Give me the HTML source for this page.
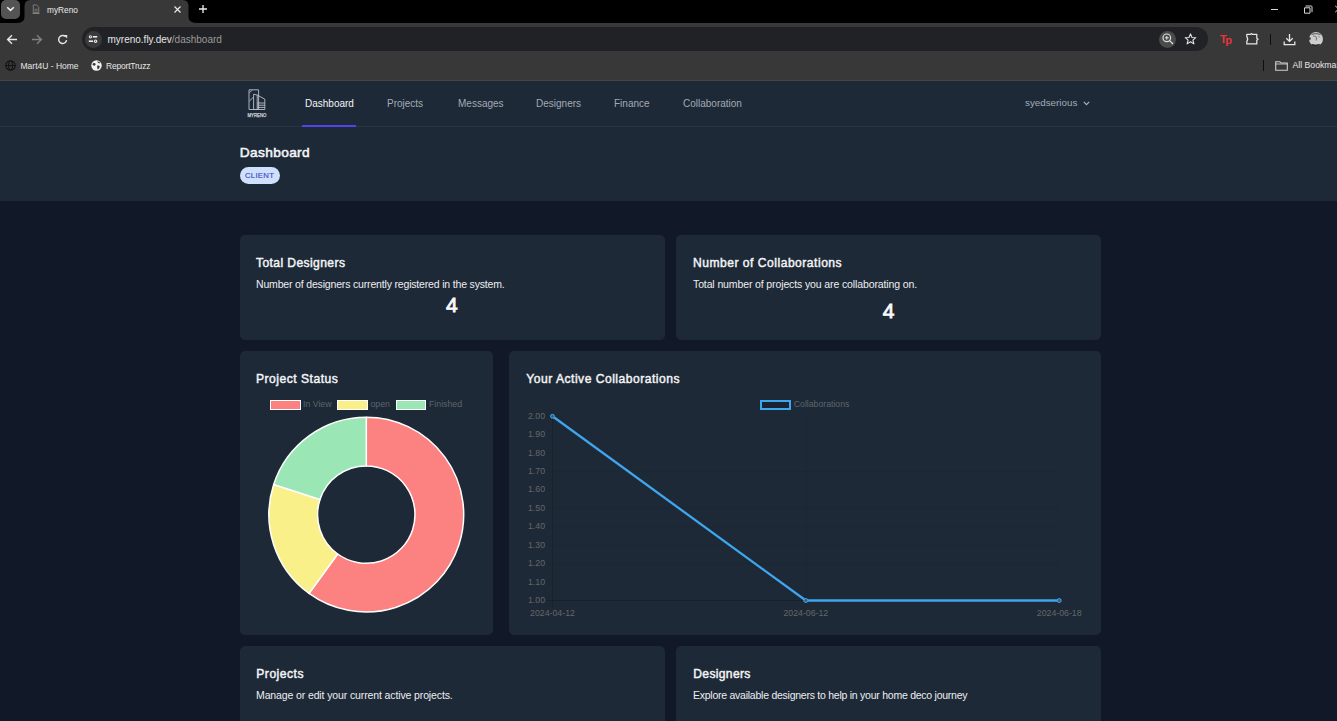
<!DOCTYPE html>
<html><head><meta charset="utf-8">
<style>
*{margin:0;padding:0;box-sizing:border-box}
html,body{width:1337px;height:721px;overflow:hidden;background:#111827;font-family:"Liberation Sans",sans-serif}
.a{position:absolute;white-space:nowrap}
#tabstrip{position:absolute;left:0;top:0;width:1337px;height:23px;background:#000}
#toolbar{position:absolute;left:0;top:22.6px;width:1337px;height:29.4px;background:#383838}
#bookbar{position:absolute;left:0;top:52px;width:1337px;height:29px;background:#383838}
#omni{position:absolute;left:82px;top:27px;width:1126px;height:24px;border-radius:12px;background:#212226}
#nav{position:absolute;left:0;top:81px;width:1337px;height:46px;background:#1e2937;border-bottom:1px solid #2b3544}
#hdr{position:absolute;left:0;top:127px;width:1337px;height:74px;background:#1e2937}
.card{position:absolute;background:#1e2937;border-radius:5px}
.nv{font-size:10px;color:#a3aab5;top:98.4px}
.ct{font-size:12.1px;font-weight:normal;color:#f3f4f6;letter-spacing:.5px;-webkit-text-stroke:.45px #f3f4f6}
.cd{font-size:10.5px;color:#eceef1;letter-spacing:-.12px}
.big{font-size:21px;font-weight:normal;color:#f9fafb;-webkit-text-stroke:.85px #f9fafb}
.tk{font-size:8.75px;color:#666}
</style></head><body>
<div id="tabstrip"></div>
<!-- dropdown btn -->
<div class="a" style="left:1px;top:0;width:19px;height:18.6px;border-radius:5px;background:#545454"></div>
<svg class="a" style="left:6px;top:6px" width="9" height="6" viewBox="0 0 9 6"><path d="M1.2 1.2 L4.5 4.4 L7.8 1.2" fill="none" stroke="#f0f0f0" stroke-width="1.5"/></svg>
<!-- tab -->
<svg class="a" style="left:16px;top:0" width="182" height="23" viewBox="0 0 182 23"><path d="M0 23 Q8.5 23 8.5 17 L8.5 6 Q8.5 0 14.5 0 L166.5 0 Q172.5 0 172.5 6 L172.5 17 Q172.5 23 182 23 Z" fill="#383838"/></svg>
<svg class="a" style="left:32px;top:4px" width="8" height="10" viewBox="0 0 8 10"><path d="M1.3 1 H4.6 L6.8 3.2 V8.6 H1.3 Z" fill="none" stroke="#8c8c8c" stroke-width=".8"/><path d="M2.4 5.3 H5.8 M2.4 6.9 H5.8" stroke="#8c8c8c" stroke-width=".7"/><path d="M0.5 9.6 H7.5" stroke="#bbb" stroke-width=".6"/></svg>
<div class="a" style="left:47px;top:4.5px;font-size:8.3px;color:#ececec">myReno</div>
<svg class="a" style="left:173px;top:5px" width="9" height="9" viewBox="0 0 9 9"><path d="M1.5 1.5 L7.5 7.5 M7.5 1.5 L1.5 7.5" stroke="#e8e8e8" stroke-width="1.2"/></svg>
<svg class="a" style="left:198px;top:4px" width="10" height="10" viewBox="0 0 10 10"><path d="M5 1 V9 M1 5 H9" stroke="#f0f0f0" stroke-width="1.3"/></svg>
<!-- window controls -->
<div class="a" style="left:1271px;top:9px;width:7px;height:1px;background:#d8d8d8"></div>
<svg class="a" style="left:1303px;top:4.5px" width="10" height="9" viewBox="0 0 10 9"><path d="M1.5 2.8 H7 V8.2 H1.5 Z" fill="none" stroke="#d8d8d8" stroke-width="1"/><path d="M2.5 1 H8.2 Q9 1 9 1.8 V7.2" fill="none" stroke="#d8d8d8" stroke-width="1"/></svg>
<svg class="a" style="left:1334.5px;top:4.5px" width="3" height="9" viewBox="0 0 3 9"><path d="M0 0.5 L7 7.5 M7 0.5 L0 7.5" stroke="#d8d8d8" stroke-width="1"/></svg>
<div id="toolbar"></div>
<div id="bookbar"></div>
<div class="a" style="left:0;top:80px;width:1337px;height:1px;background:#444"></div>
<div id="omni"></div>
<!-- nav buttons -->
<svg class="a" style="left:6px;top:34px" width="12" height="11" viewBox="0 0 12 11"><path d="M11 5.5 H2 M6 1.2 L1.6 5.5 L6 9.8" fill="none" stroke="#e6e6e6" stroke-width="1.4"/></svg>
<svg class="a" style="left:31px;top:34px" width="12" height="11" viewBox="0 0 12 11"><path d="M1 5.5 H10 M6 1.2 L10.4 5.5 L6 9.8" fill="none" stroke="#808080" stroke-width="1.4"/></svg>
<svg class="a" style="left:57px;top:34px" width="12" height="11" viewBox="0 0 12 11"><path d="M9.6 6.2 A4 4 0 1 1 8.4 2.6" fill="none" stroke="#e6e6e6" stroke-width="1.4"/><path d="M6.6 1 H10.2 V4.6 Z" fill="#e6e6e6"/></svg>
<!-- site info -->
<div class="a" style="left:84.5px;top:31px;width:17px;height:17px;border-radius:50%;background:#3a3a3a"></div>
<svg class="a" style="left:88px;top:34px" width="10" height="10" viewBox="0 0 10 10"><circle cx="2.4" cy="2.8" r="1.6" fill="#eee"/><circle cx="2.4" cy="2.8" r=".6" fill="#3a3a3a"/><path d="M4.8 2.8 H9.2" stroke="#eee" stroke-width="1.6"/><path d="M.8 7.2 H5" stroke="#eee" stroke-width="1.6"/><circle cx="7.6" cy="7.2" r="1.7" fill="#eee"/><circle cx="7.6" cy="7.2" r=".65" fill="#3a3a3a"/></svg>
<div class="a" style="left:107.5px;top:33.8px;font-size:10px;color:#e6e6e6">myreno.fly.dev<span style="color:#9b9b9b">/dashboard</span></div>
<!-- omni right -->
<div class="a" style="left:1159px;top:30.7px;width:17.3px;height:17.3px;border-radius:50%;background:#4b4b4b"></div>
<svg class="a" style="left:1161px;top:32px" width="14" height="14" viewBox="0 0 14 14"><circle cx="5.8" cy="5.8" r="3.8" fill="none" stroke="#e0e0e0" stroke-width="1.2"/><path d="M8.6 8.6 L12 12" stroke="#e0e0e0" stroke-width="1.3"/><path d="M5.8 4 V7.6 M4 5.8 H7.6" stroke="#e0e0e0" stroke-width="1"/></svg>
<svg class="a" style="left:1184px;top:33px" width="13" height="12" viewBox="0 0 13 12"><path d="M6.5 .9 L8 4.5 L11.8 4.7 L8.9 7.1 L9.9 10.9 L6.5 8.8 L3.1 10.9 L4.1 7.1 L1.2 4.7 L5 4.5 Z" fill="none" stroke="#e6e6e6" stroke-width="1.1" stroke-linejoin="round"/></svg>
<!-- extensions -->
<div class="a" style="left:1220px;top:32.5px;font-size:11px;font-weight:bold;color:#e9343a;letter-spacing:-1.6px">T<span style="position:relative;top:1px">p</span></div>
<svg class="a" style="left:1245px;top:33px" width="14" height="12" viewBox="0 0 14 12"><path d="M1.8 1.3 H5.6 Q6.5 0 7.4 1.3 H11.8 V5.2 L13 6.2 L11.8 7.2 V10.9 H1.8 V8.6 Q3.6 6.2 1.8 3.6 Z" fill="none" stroke="#e6e6e6" stroke-width="1.25" stroke-linejoin="round"/></svg>
<div class="a" style="left:1270px;top:34px;width:1px;height:10.5px;background:#0e0e0e"></div>
<svg class="a" style="left:1283px;top:33px" width="13" height="13" viewBox="0 0 13 13"><path d="M6.5 1 V8.2 M3.3 5.2 L6.5 8.4 L9.7 5.2" fill="none" stroke="#e6e6e6" stroke-width="1.3"/><path d="M1.2 8.5 V11.6 H11.8 V8.5" fill="none" stroke="#e6e6e6" stroke-width="1.3"/></svg>
<svg class="a" style="left:1307.5px;top:31px" width="16" height="16" viewBox="0 0 16 16"><circle cx="8" cy="8" r="7" fill="#cdcdcd"/><path d="M1.3 9.2 A7 7 0 0 1 1.6 5.5 L3 8 Z" fill="#222"/><path d="M4 13.8 Q8 15.8 11.5 13.6 Q8 14.6 4 13.8 Z" fill="#222" stroke="#222" stroke-width="1"/><path d="M3.5 3.6 Q8 1.6 12.6 3.8" fill="none" stroke="#6e6e6e" stroke-width="1.2"/><path d="M5 5.2 Q7.5 4.6 8.5 6.5 L8.3 9.5" fill="none" stroke="#7a7a7a" stroke-width="1.1"/><path d="M10 5.5 L12.2 6" stroke="#999" stroke-width="1"/></svg>
<!-- bookmarks -->
<svg class="a" style="left:4.5px;top:60px" width="11" height="11" viewBox="0 0 11 11"><circle cx="5.5" cy="5.5" r="4.7" fill="none" stroke="#111" stroke-width="1.1"/><ellipse cx="5.5" cy="5.5" rx="2" ry="4.7" fill="none" stroke="#111" stroke-width="1"/><path d="M.8 5.5 H10.2" stroke="#111" stroke-width="1"/></svg>
<div class="a" style="left:20.5px;top:60.5px;font-size:8.5px;color:#e6e6e6">Mart4U - Home</div>
<svg class="a" style="left:91px;top:60px" width="11" height="11" viewBox="0 0 11 11"><circle cx="5.5" cy="5.5" r="5.2" fill="#f2f2f2"/><path d="M2 3.2 Q3.6 2.4 4.6 3.8 Q5 5.4 3.4 5.8 Q2 5.6 1.4 4.6 Z M6.2 5.6 Q8 5 8.8 6.4 Q8.6 8.6 6.8 9.4 Q6 8 6.2 5.6 Z M6.5 1.2 Q8.5 1.6 9.4 3 Q8 3.6 6.8 2.6 Z" fill="#333"/></svg>
<div class="a" style="left:106px;top:60.5px;font-size:8.5px;color:#e6e6e6;letter-spacing:-.2px">ReportTruzz</div>
<div class="a" style="left:1263px;top:60px;width:1px;height:11px;background:#0e0e0e"></div>
<svg class="a" style="left:1274.5px;top:60.5px" width="13" height="10" viewBox="0 0 13 10"><path d="M.7 .7 H4.8 L6 2 H12.3 V9.3 H.7 Z" fill="none" stroke="#cfcfcf" stroke-width="1.1"/><path d="M.7 3 H12.3" stroke="#cfcfcf" stroke-width=".9"/></svg>
<div class="a" style="left:1292.5px;top:60px;font-size:8.7px;color:#e6e6e6">All Bookmarks</div>

<div id="nav"></div>
<div id="hdr"></div>

<!-- logo -->
<svg class="a" style="left:246px;top:88px" width="22" height="30" viewBox="0 0 22 30"><g fill="none" stroke="#b9c0c9" stroke-width="0.9"><path d="M3 1.8 H12.6 V21.5 H3 Z"/><path d="M3.4 4.8 L6 2.2"/><path d="M3.4 13 L7.6 9"/><path d="M7.6 21.5 V6.2 L11.2 7 L18.8 11.2 V21.5 H7.6"/><path d="M11.2 7 V21.5"/><path d="M11.2 15 H18.8 M11.2 17.2 H18.8 M11.2 19.4 H18.8"/></g>
<text x="11" y="28.5" text-anchor="middle" font-family="Liberation Sans" font-size="5.2" fill="#d0d5dc" stroke="#d0d5dc" stroke-width=".25" textLength="19" lengthAdjust="spacingAndGlyphs">MYRENO</text></svg>
<svg class="a" style="left:1083px;top:100.6px" width="7" height="5" viewBox="0 0 7 5"><path d="M.8 .9 L3.5 3.6 L6.2 .9" fill="none" stroke="#aeb4bd" stroke-width="1.1"/></svg>
<div class="a nv" style="left:305px;color:#f3f4f6">Dashboard</div>
<div class="a" style="left:302px;top:125px;width:54px;height:2px;background:#4f46e5"></div>
<div class="a nv" style="left:387px">Projects</div>
<div class="a nv" style="left:458px">Messages</div>
<div class="a nv" style="left:536px">Designers</div>
<div class="a nv" style="left:614px">Finance</div>
<div class="a nv" style="left:683px">Collaboration</div>
<div class="a nv" style="left:1025px;top:96.8px;font-size:9.8px">syedserious</div>

<div class="a" style="left:239.8px;top:144.8px;font-size:13.7px;font-weight:normal;color:#f3f4f6;letter-spacing:.36px;-webkit-text-stroke:.55px #f3f4f6">Dashboard</div>
<div class="a" style="left:240px;top:167px;width:40px;height:17px;border-radius:9px;background:#cfe0fc"></div>
<div class="a" style="left:245px;top:170.8px;font-size:7.7px;font-weight:normal;color:#3b4cc4;letter-spacing:.3px;-webkit-text-stroke:.15px #3b4cc4">CLIENT</div>

<div class="card" style="left:240px;top:235px;width:425px;height:105px"></div>
<div class="card" style="left:676px;top:235px;width:425px;height:105px"></div>
<div class="card" style="left:240px;top:351px;width:253px;height:284px"></div>
<div class="card" style="left:509px;top:351px;width:592px;height:284px"></div>
<div class="card" style="left:240px;top:646px;width:425px;height:100px"></div>
<div class="card" style="left:676px;top:646px;width:425px;height:100px"></div>

<div class="a ct" style="left:256px;top:255.6px;letter-spacing:.4px">Total Designers</div>
<div class="a cd" style="left:256px;top:278px;letter-spacing:-.17px">Number of designers currently registered in the system.</div>
<div class="a big" style="left:446px;top:292.7px">4</div>

<div class="a ct" style="left:693px;top:255.6px">Number of Collaborations</div>
<div class="a cd" style="left:693px;top:278px">Total number of projects you are collaborating on.</div>
<div class="a big" style="left:882.8px;top:298.7px">4</div>

<div class="a ct" style="left:256px;top:371.6px">Project Status</div>
<div class="a ct" style="left:526.3px;top:371.6px">Your Active Collaborations</div>

<div class="a ct" style="left:256.3px;top:666.6px">Projects</div>
<div class="a cd" style="left:256px;top:689px">Manage or edit your current active projects.</div>
<div class="a ct" style="left:693.3px;top:666.6px;letter-spacing:.33px">Designers</div>
<div class="a cd" style="left:693px;top:689px;letter-spacing:-.25px">Explore available designers to help in your home deco journey</div>

<!-- charts -->
<svg class="a" style="left:0;top:0" width="1337" height="721" viewBox="0 0 1337 721"><path d="M366.30 417.20 A97.4 97.4 0 1 1 309.05 593.40 L337.67 554.00 A48.7 48.7 0 1 0 366.30 465.90 Z" fill="#fc8181" stroke="#fff" stroke-width="1.5" stroke-linejoin="round"/><path d="M309.05 593.40 A97.4 97.4 0 0 1 273.67 484.50 L319.98 499.55 A48.7 48.7 0 0 0 337.67 554.00 Z" fill="#faf089" stroke="#fff" stroke-width="1.5" stroke-linejoin="round"/><path d="M273.67 484.50 A97.4 97.4 0 0 1 366.30 417.20 L366.30 465.90 A48.7 48.7 0 0 0 319.98 499.55 Z" fill="#9ae6b4" stroke="#fff" stroke-width="1.5" stroke-linejoin="round"/></svg>
<div class="a" style="left:269.5px;top:399.5px;width:31px;height:10.5px;background:#fc8181;border:1.5px solid #fff"></div>
<div class="a tk" style="left:303px;top:398.5px;color:#5d636b">In View</div>
<div class="a" style="left:337px;top:399.5px;width:30.5px;height:10.5px;background:#faf089;border:1.5px solid #fff"></div>
<div class="a tk" style="left:370.5px;top:398.5px;color:#5d636b">open</div>
<div class="a" style="left:395.5px;top:399.5px;width:30.5px;height:10.5px;background:#9ae6b4;border:1.5px solid #fff"></div>
<div class="a tk" style="left:429px;top:398.5px;color:#5d636b">Finished</div>
<svg class="a" style="left:0;top:0" width="1337" height="721" viewBox="0 0 1337 721">
<line x1="546.5" y1="600.50" x2="1059.2" y2="600.50" stroke="rgba(0,0,0,0.06)" stroke-width="0.75"/>
<line x1="546.5" y1="582.08" x2="1059.2" y2="582.08" stroke="rgba(0,0,0,0.06)" stroke-width="0.75"/>
<line x1="546.5" y1="563.66" x2="1059.2" y2="563.66" stroke="rgba(0,0,0,0.06)" stroke-width="0.75"/>
<line x1="546.5" y1="545.24" x2="1059.2" y2="545.24" stroke="rgba(0,0,0,0.06)" stroke-width="0.75"/>
<line x1="546.5" y1="526.82" x2="1059.2" y2="526.82" stroke="rgba(0,0,0,0.06)" stroke-width="0.75"/>
<line x1="546.5" y1="508.40" x2="1059.2" y2="508.40" stroke="rgba(0,0,0,0.06)" stroke-width="0.75"/>
<line x1="546.5" y1="489.98" x2="1059.2" y2="489.98" stroke="rgba(0,0,0,0.06)" stroke-width="0.75"/>
<line x1="546.5" y1="471.56" x2="1059.2" y2="471.56" stroke="rgba(0,0,0,0.06)" stroke-width="0.75"/>
<line x1="546.5" y1="453.14" x2="1059.2" y2="453.14" stroke="rgba(0,0,0,0.06)" stroke-width="0.75"/>
<line x1="546.5" y1="434.72" x2="1059.2" y2="434.72" stroke="rgba(0,0,0,0.06)" stroke-width="0.75"/>
<line x1="546.5" y1="416.30" x2="1059.2" y2="416.30" stroke="rgba(0,0,0,0.06)" stroke-width="0.75"/>
<line x1="552.50" y1="416.3" x2="552.50" y2="606.5" stroke="rgba(0,0,0,0.06)" stroke-width="0.75"/>
<line x1="805.85" y1="416.3" x2="805.85" y2="606.5" stroke="rgba(0,0,0,0.06)" stroke-width="0.75"/>
<line x1="1059.20" y1="416.3" x2="1059.20" y2="606.5" stroke="rgba(0,0,0,0.06)" stroke-width="0.75"/>
<line x1="546.5" y1="600.5" x2="1059.2" y2="600.5" stroke="rgba(0,0,0,0.16)" stroke-width="0.75"/>
<line x1="552.5" y1="416.3" x2="552.5" y2="606.5" stroke="rgba(0,0,0,0.16)" stroke-width="0.75"/>
<path d="M552.50 416.30 L805.85 600.50 L1059.20 600.50" fill="none" stroke="#3ea6ee" stroke-width="2.3" stroke-linejoin="round"/>
<circle cx="552.50" cy="416.30" r="2" fill="#3a5f80" stroke="#3ea6ee" stroke-width="1"/>
<circle cx="805.85" cy="600.50" r="2" fill="#3a5f80" stroke="#3ea6ee" stroke-width="1"/>
<circle cx="1059.20" cy="600.50" r="2" fill="#3a5f80" stroke="#3ea6ee" stroke-width="1"/>
</svg>
<div class="a tk" style="right:792px;top:410.80px">2.00</div>
<div class="a tk" style="right:792px;top:429.22px">1.90</div>
<div class="a tk" style="right:792px;top:447.64px">1.80</div>
<div class="a tk" style="right:792px;top:466.06px">1.70</div>
<div class="a tk" style="right:792px;top:484.48px">1.60</div>
<div class="a tk" style="right:792px;top:502.90px">1.50</div>
<div class="a tk" style="right:792px;top:521.32px">1.40</div>
<div class="a tk" style="right:792px;top:539.74px">1.30</div>
<div class="a tk" style="right:792px;top:558.16px">1.20</div>
<div class="a tk" style="right:792px;top:576.58px">1.10</div>
<div class="a tk" style="right:792px;top:595.00px">1.00</div>
<div class="a tk" style="left:529.50px;top:607.6px;width:46px;text-align:center">2024-04-12</div>
<div class="a tk" style="left:782.85px;top:607.6px;width:46px;text-align:center">2024-06-12</div>
<div class="a tk" style="left:1036.20px;top:607.6px;width:46px;text-align:center">2024-06-18</div>
<div class="a" style="left:760px;top:399.5px;width:30.5px;height:10.5px;background:rgba(0,0,0,0.12);border:2.2px solid #3ea6ee"></div>
<div class="a tk" style="left:793.8px;top:398.8px;font-size:8.7px;color:#5d636b">Collaborations</div>

</body></html>
